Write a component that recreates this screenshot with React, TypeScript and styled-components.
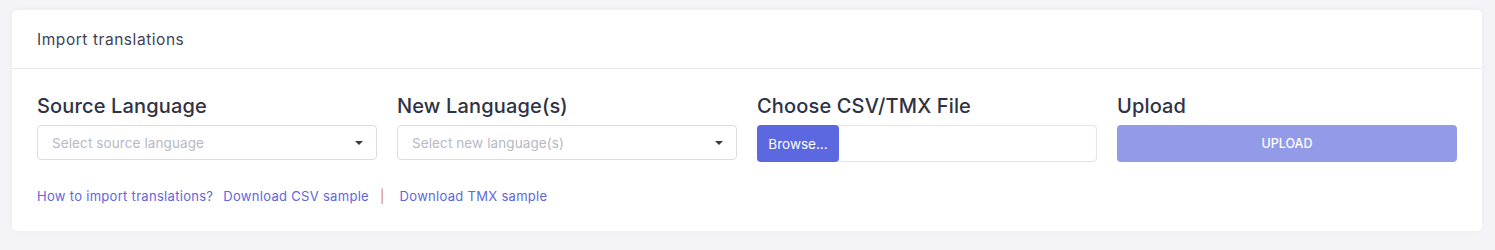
import React from "react";
import styled, { createGlobalStyle } from "styled-components";

const Global = createGlobalStyle`
  html, body { margin: 0; padding: 0; background: #f3f3f8; }
  body { font-family: "Inter", "Open Sans", sans-serif; }
  * { box-sizing: border-box; }
`;

const Page = styled.div`
  padding: 10px 13px 19px 12px;
`;

const Card = styled.div`
  background: #ffffff;
  border-radius: 5px;
  box-shadow: 0 0 6px rgba(30, 30, 60, 0.04);
`;

const CardHeader = styled.div`
  height: 59px;
  padding: 0 25px;
  display: flex;
  align-items: center;
  border-bottom: 1px solid #e9e9ef;
  font-size: 15.5px;
  letter-spacing: 0.55px;
  color: #3e4256;
  font-weight: 400;
`;

const CardBody = styled.div`
  padding: 25px 25px 27px 25px;
`;

const Grid = styled.div`
  display: grid;
  grid-template-columns: repeat(4, 340px);
  column-gap: 20px;
`;

const Field = styled.div`
  display: flex;
  flex-direction: column;
`;

const Label = styled.div`
  font-size: 20px;
  letter-spacing: 0.15px;
  color: #2f3244;
  font-weight: 500;
  line-height: 24px;
  margin-bottom: 7px;
`;

const Select = styled.div`
  height: 35px;
  border: 1px solid #dcdce3;
  border-radius: 4px;
  display: flex;
  align-items: center;
  justify-content: space-between;
  padding: 0 13px 0 14px;
  font-size: 13.5px;
  letter-spacing: 0.1px;
  color: #b7b9c4;
`;

const Caret = styled.span`
  width: 0;
  height: 0;
  border-left: 4px solid transparent;
  border-right: 4px solid transparent;
  border-top: 4px solid #3a3a40;
`;

const FileBox = styled.div`
  height: 37px;
  border: 1px solid #e3e3ea;
  border-radius: 4px;
  display: flex;
`;

const BrowseBtn = styled.div`
  width: 82px;
  background: #5b68df;
  color: #ffffff;
  font-size: 13.5px;
  display: flex;
  align-items: center;
  justify-content: center;
  border-radius: 4px;
  margin: -1px 0 -1px -1px;
`;

const UploadBtn = styled.div`
  height: 37px;
  border-radius: 4px;
  background: #939be9;
  color: #ffffff;
  font-size: 12.5px;
  font-weight: 500;
  display: flex;
  align-items: center;
  justify-content: center;
`;

const Links = styled.div`
  margin-top: 26px;
  display: flex;
  align-items: center;
  font-size: 13px;
  letter-spacing: 0.3px;
  color: #5e66e0;
`;

const Link = styled.a<{ $gap?: number }>`
  color: #5e66e0;
  text-decoration: none;
  margin-right: ${(p) => p.$gap ?? 0}px;
`;

const Sep = styled.span`
  color: #d9822b;
  margin-right: 15px;
`;

export default function App() {
  return (
    <>
      <Global />
      <Page>
        <Card>
          <CardHeader>Import translations</CardHeader>
          <CardBody>
            <Grid>
              <Field>
                <Label>Source Language</Label>
                <Select>
                  Select source language
                  <Caret />
                </Select>
              </Field>
              <Field>
                <Label>New Language(s)</Label>
                <Select>
                  Select new language(s)
                  <Caret />
                </Select>
              </Field>
              <Field>
                <Label>Choose CSV/TMX File</Label>
                <FileBox>
                  <BrowseBtn>Browse...</BrowseBtn>
                </FileBox>
              </Field>
              <Field>
                <Label>Upload</Label>
                <UploadBtn>UPLOAD</UploadBtn>
              </Field>
            </Grid>
            <Links>
              <Link $gap={10}>How to import translations?</Link>
              <Link $gap={11}>Download CSV sample</Link>
              <Sep>|</Sep>
              <Link>Download TMX sample</Link>
            </Links>
          </CardBody>
        </Card>
      </Page>
    </>
  );
}
